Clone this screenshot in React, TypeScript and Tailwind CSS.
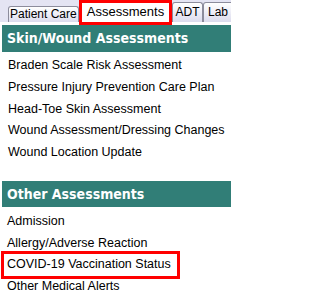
export default function App() {
  const skin = [
    "Braden Scale Risk Assessment",
    "Pressure Injury Prevention Care Plan",
    "Head-Toe Skin Assessment",
    "Wound Assessment/Dressing Changes",
    "Wound Location Update",
  ];
  const other = ["Admission", "Allergy/Adverse Reaction", "COVID-19 Vaccination Status", "Other Medical Alerts"];

  return (
    <div className="w-[231px] h-[305px] overflow-hidden bg-white font-['Liberation_Sans',Arial,sans-serif] text-black">
      {/* tabs */}
      <div className="flex h-[25px] pl-[8px] bg-[linear-gradient(to_bottom,#e4e4f3_22px,#ffffff_22px)]">
        <div className="mt-[6px] h-[16px] w-[71px] shrink-0 whitespace-nowrap rounded-t-[3px] border border-b-0 border-[#8c8c9c] bg-[linear-gradient(to_bottom,#ffffff,#dcdcee)] pl-[1px] text-[12px] leading-[15px]">
          Patient Care
        </div>
        <div className="h-[25px] w-[93px] shrink-0 whitespace-nowrap border-[3px] border-[#ff0000] bg-white text-center text-[13px] leading-[17px]">
          Assessments
        </div>
        <div className="mt-[2px] h-[20px] w-[31px] shrink-0 rounded-t-[3px] border border-b-0 border-[#8c8c9c] bg-[linear-gradient(to_bottom,#ffffff,#dcdcee)] text-center text-[12px] leading-[19px]">
          ADT
        </div>
        <div className="mt-[2px] h-[20px] w-[40px] shrink-0 rounded-t-[3px] border border-b-0 border-[#8c8c9c] bg-[linear-gradient(to_bottom,#ffffff,#dcdcee)] pl-[4px] text-[12px] leading-[19px]">
          Lab
        </div>
      </div>

      <div className="ml-[2px] h-[27px] bg-[#317e77] pl-[5px] font-['DejaVu_Sans_Condensed','DejaVu_Sans',Verdana,sans-serif] text-[14px] font-bold leading-[27px] text-white">
        Skin/Wound Assessments
      </div>
      <ul className="mt-[3px]">
        {skin.map((s) => (
          <li key={s} className="h-[21.75px] whitespace-nowrap pl-[8px] text-[12.5px] leading-[21.75px]">
            {s}
          </li>
        ))}
      </ul>

      <div className="ml-[2px] mt-[17px] h-[26px] bg-[#317e77] pl-[5px] font-['DejaVu_Sans_Condensed','DejaVu_Sans',Verdana,sans-serif] text-[14px] font-bold leading-[26px] text-white">
        Other Assessments
      </div>
      <ul className="mt-[4px]">
        {other.map((s) => (
          <li key={s} className="relative h-[21.75px] whitespace-nowrap pl-[7px] text-[12.5px] leading-[21.75px]">
            {s}
            {s.startsWith("COVID") && (
              <span className="absolute left-[1px] top-[-3.5px] bottom-[-2.75px] w-[179px] border-[3px] border-[#ff0000]" />
            )}
          </li>
        ))}
      </ul>
    </div>
  );
}
